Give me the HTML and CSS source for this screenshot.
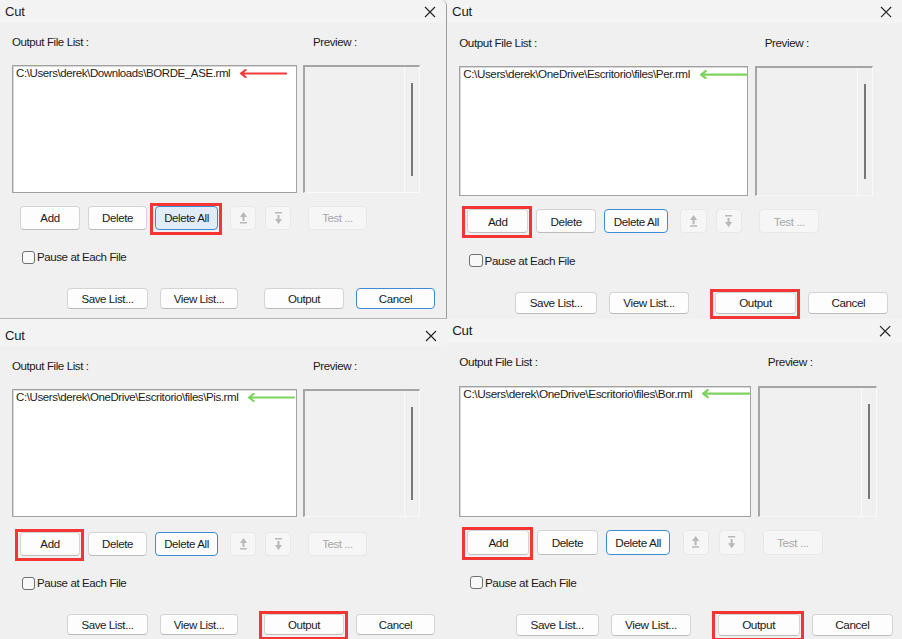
FILE: index.html
```html
<!DOCTYPE html>
<html lang="en">
<head>
    <meta charset="UTF-8">
    <meta name="viewport" content="width=device-width, initial-scale=1.0">
    <title>Cut</title>
    <link rel="stylesheet" href="styles.css">
</head>
<body>

<div class="screen">

    <!-- 1: Delete All -->
    <section class="dialog dialog-a">
        <header class="titlebar">
            <span class="title">Cut</span>
            <svg class="close" width="12" height="12" viewBox="0 0 12 12"><path d="M1 1L11 11M11 1L1 11"/></svg>
        </header>
        <div class="body">
            <div class="labels"><span class="label-list">Output File List :</span><span>Preview :</span></div>
            <div class="lists">
                <div class="filelist">
                    <div class="file">C:\Users\derek\Downloads\BORDE_ASE.rml<svg class="arrow arrow-red" width="48" height="9" viewBox="0 0 48 9"><path d="M2 4.5H47M6.5 1L2 4.5L6.5 8"/></svg></div>
                </div>
                <div class="preview"><div class="scrollbar"><span class="thumb"></span></div></div>
            </div>
            <div class="tools">
                <button class="btn btn-add">Add</button>
                <button class="btn btn-delete">Delete</button>
                <button class="btn btn-delall btn-focus mark">Delete All</button>
                <button class="btn btn-move btn-up" disabled><svg width="9" height="12" viewBox="0 0 9 12"><path d="M4.5 0L8 5H1Z M3.5 5H5.5V9H3.5Z M1 10H8V11.5H1Z"/></svg></button>
                <button class="btn btn-move btn-down" disabled><svg width="9" height="12" viewBox="0 0 9 12"><path d="M1 0H8V1.5H1Z M3.5 3H5.5V7H3.5Z M1 7H8L4.5 12Z"/></svg></button>
                <button class="btn btn-test" disabled>Test ...</button>
            </div>
            <label class="pause"><span class="check"></span>Pause at Each File</label>
            <div class="actions">
                <button class="btn btn-save">Save List...</button>
                <button class="btn btn-view">View List...</button>
                <button class="btn btn-output">Output</button>
                <button class="btn btn-cancel btn-default">Cancel</button>
            </div>
        </div>
    </section>

    <!-- 2: Per.rml -->
    <section class="dialog dialog-b">
        <header class="titlebar">
            <span class="title">Cut</span>
            <svg class="close" width="12" height="12" viewBox="0 0 12 12"><path d="M1 1L11 11M11 1L1 11"/></svg>
        </header>
        <div class="body">
            <div class="labels"><span class="label-list">Output File List :</span><span>Preview :</span></div>
            <div class="lists">
                <div class="filelist">
                    <div class="file">C:\Users\derek\OneDrive\Escritorio\files\Per.rml<svg class="arrow arrow-green" width="48" height="9" viewBox="0 0 48 9"><path d="M2 4.5H47M6.5 1L2 4.5L6.5 8"/></svg></div>
                </div>
                <div class="preview"><div class="scrollbar"><span class="thumb"></span></div></div>
            </div>
            <div class="tools">
                <button class="btn btn-add mark">Add</button>
                <button class="btn btn-delete">Delete</button>
                <button class="btn btn-delall btn-default">Delete All</button>
                <button class="btn btn-move btn-up" disabled><svg width="9" height="12" viewBox="0 0 9 12"><path d="M4.5 0L8 5H1Z M3.5 5H5.5V9H3.5Z M1 10H8V11.5H1Z"/></svg></button>
                <button class="btn btn-move btn-down" disabled><svg width="9" height="12" viewBox="0 0 9 12"><path d="M1 0H8V1.5H1Z M3.5 3H5.5V7H3.5Z M1 7H8L4.5 12Z"/></svg></button>
                <button class="btn btn-test" disabled>Test ...</button>
            </div>
            <label class="pause"><span class="check"></span>Pause at Each File</label>
            <div class="actions">
                <button class="btn btn-save">Save List...</button>
                <button class="btn btn-view">View List...</button>
                <button class="btn btn-output mark">Output</button>
                <button class="btn btn-cancel">Cancel</button>
            </div>
        </div>
    </section>

    <!-- 3: Pis.rml -->
    <section class="dialog dialog-c">
        <header class="titlebar">
            <span class="title">Cut</span>
            <svg class="close" width="12" height="12" viewBox="0 0 12 12"><path d="M1 1L11 11M11 1L1 11"/></svg>
        </header>
        <div class="body">
            <div class="labels"><span class="label-list">Output File List :</span><span>Preview :</span></div>
            <div class="lists">
                <div class="filelist">
                    <div class="file">C:\Users\derek\OneDrive\Escritorio\files\Pis.rml<svg class="arrow arrow-green" width="48" height="9" viewBox="0 0 48 9"><path d="M2 4.5H47M6.5 1L2 4.5L6.5 8"/></svg></div>
                </div>
                <div class="preview"><div class="scrollbar"><span class="thumb"></span></div></div>
            </div>
            <div class="tools">
                <button class="btn btn-add mark">Add</button>
                <button class="btn btn-delete">Delete</button>
                <button class="btn btn-delall btn-default">Delete All</button>
                <button class="btn btn-move btn-up" disabled><svg width="9" height="12" viewBox="0 0 9 12"><path d="M4.5 0L8 5H1Z M3.5 5H5.5V9H3.5Z M1 10H8V11.5H1Z"/></svg></button>
                <button class="btn btn-move btn-down" disabled><svg width="9" height="12" viewBox="0 0 9 12"><path d="M1 0H8V1.5H1Z M3.5 3H5.5V7H3.5Z M1 7H8L4.5 12Z"/></svg></button>
                <button class="btn btn-test" disabled>Test ...</button>
            </div>
            <label class="pause"><span class="check"></span>Pause at Each File</label>
            <div class="actions">
                <button class="btn btn-save">Save List...</button>
                <button class="btn btn-view">View List...</button>
                <button class="btn btn-output mark">Output</button>
                <button class="btn btn-cancel">Cancel</button>
            </div>
        </div>
    </section>

    <!-- 4: Bor.rml -->
    <section class="dialog dialog-d">
        <header class="titlebar">
            <span class="title">Cut</span>
            <svg class="close" width="12" height="12" viewBox="0 0 12 12"><path d="M1 1L11 11M11 1L1 11"/></svg>
        </header>
        <div class="body">
            <div class="labels"><span class="label-list">Output File List :</span><span>Preview :</span></div>
            <div class="lists">
                <div class="filelist">
                    <div class="file">C:\Users\derek\OneDrive\Escritorio\files\Bor.rml<svg class="arrow arrow-green" width="48" height="9" viewBox="0 0 48 9"><path d="M2 4.5H47M6.5 1L2 4.5L6.5 8"/></svg></div>
                </div>
                <div class="preview"><div class="scrollbar"><span class="thumb"></span></div></div>
            </div>
            <div class="tools">
                <button class="btn btn-add mark">Add</button>
                <button class="btn btn-delete">Delete</button>
                <button class="btn btn-delall btn-default">Delete All</button>
                <button class="btn btn-move btn-up" disabled><svg width="9" height="12" viewBox="0 0 9 12"><path d="M4.5 0L8 5H1Z M3.5 5H5.5V9H3.5Z M1 10H8V11.5H1Z"/></svg></button>
                <button class="btn btn-move btn-down" disabled><svg width="9" height="12" viewBox="0 0 9 12"><path d="M1 0H8V1.5H1Z M3.5 3H5.5V7H3.5Z M1 7H8L4.5 12Z"/></svg></button>
                <button class="btn btn-test" disabled>Test ...</button>
            </div>
            <label class="pause"><span class="check"></span>Pause at Each File</label>
            <div class="actions">
                <button class="btn btn-save">Save List...</button>
                <button class="btn btn-view">View List...</button>
                <button class="btn btn-output mark">Output</button>
                <button class="btn btn-cancel">Cancel</button>
            </div>
        </div>
    </section>

</div>

</body>
</html>
```

FILE: styles.css
```css
body {
    margin: 0;
    background: #f0f0f0;
    font-family: "Liberation Sans", Arial, sans-serif;
    font-size: 11.5px;
    letter-spacing: -0.4px;
    color: #1b1b1b;
}

.screen {
    display: grid;
    grid-template-columns: 447px 455px;
    grid-template-rows: 319px 320px;
    width: 902px;
    height: 639px;
    overflow: hidden;
}

.dialog {
    box-sizing: border-box;
    background: #f0f0f0;
    overflow: hidden;
}

.dialog-a {
    border-right: 1px solid #9c9c9c;
    border-bottom: 1px solid #b5b5b5;
    border-top-right-radius: 6px;
}

.dialog-b {
    zoom: 1.015;
}

.dialog-d {
    zoom: 1.025;
}

/* title bar */
.titlebar {
    height: 23px;
    display: flex;
    align-items: center;
    justify-content: space-between;
    padding: 0 10px 0 5px;
    background: #f3f3f3;
    font-size: 13px;
    letter-spacing: -0.2px;
}

.dialog-c .titlebar {
    height: 28px;
    padding-top: 5px;
    box-sizing: border-box;
}

.close path {
    stroke: #222;
    stroke-width: 1.1;
    fill: none;
}

/* content */
.body {
    padding: 12px 0 0 12px;
}

.labels {
    display: flex;
    height: 14px;
    line-height: 14px;
}

.label-list {
    width: 301px;
}

.lists {
    display: flex;
    gap: 6px;
    margin-top: 16px;
    height: 128px;
}

.filelist {
    box-sizing: border-box;
    width: 285px;
    border: 1px solid #a2a2a2;
    box-shadow: inset 1px 1px 0 #d6d6d6;
    background: #fff;
    padding: 0 3px;
}

.file {
    line-height: 14px;
    white-space: nowrap;
}

.arrow {
    vertical-align: -1px;
    margin-left: 9px;
}

.arrow path {
    fill: none;
    stroke-width: 2.2;
    stroke-linecap: round;
    stroke-linejoin: round;
}

.arrow-red path {
    stroke: #f23a3a;
}

.arrow-green path {
    stroke: #7dd35e;
}

.preview {
    box-sizing: border-box;
    width: 117px;
    border-top: 2px solid #a5a5a5;
    border-left: 2px solid #a5a5a5;
    border-right: 1px solid #fafafa;
    border-bottom: 1px solid #fafafa;
    display: flex;
    justify-content: flex-end;
}

.scrollbar {
    width: 14px;
    border-left: 1px solid #fbfbfb;
    display: flex;
    justify-content: center;
    padding: 16px 0;
}

.thumb {
    width: 2px;
    background: #777;
}

/* buttons */
.btn {
    position: relative;
    box-sizing: border-box;
    height: 100%;
    padding: 0;
    font: inherit;
    letter-spacing: inherit;
    color: #1b1b1b;
    background: #fdfdfd;
    border: 1px solid #d4d4d4;
    border-bottom-color: #bcbcbc;
    border-radius: 4px;
}

.btn:disabled {
    background: #f6f6f6;
    border-color: #e8e8e8;
    color: #a8a8a8;
}

.btn-default {
    border-color: #3f8ad4;
}

.btn-focus {
    background: #e0edf9;
    border-color: #3f8ad4;
}

.mark::after {
    content: "";
    position: absolute;
    top: -4px;
    left: -6px;
    right: -5px;
    bottom: -6px;
    border: 3px solid #f53434;
}

.tools {
    display: flex;
    gap: 8px;
    margin: 13px 0 0 8px;
    height: 24px;
}

.dialog-c .tools {
    margin-top: 15px;
}

.btn-add { width: 60px; }
.btn-delete { width: 59px; }
.btn-delall { width: 63px; }
.btn-move { width: 26px; display: flex; align-items: center; justify-content: center; }
.btn-up { margin-left: 4px; }
.btn-down { margin-left: 1px; }
.btn-test { width: 59px; margin-left: 9px; }

.btn-move svg {
    fill: #b8b8b8;
}

.pause {
    display: flex;
    align-items: center;
    gap: 2px;
    margin: 20px 0 0 10px;
    height: 14px;
}

.check {
    box-sizing: border-box;
    width: 13px;
    height: 13px;
    border: 1px solid #707070;
    border-radius: 3px;
    background: #f8f8f8;
}

.actions {
    display: flex;
    gap: 12px;
    margin: 24px 0 0 55px;
    height: 21px;
}

.btn-save { width: 81px; }
.btn-view { width: 78px; }
.btn-output { width: 80px; margin-left: 14px; }
.btn-cancel { width: 79px; }
```
